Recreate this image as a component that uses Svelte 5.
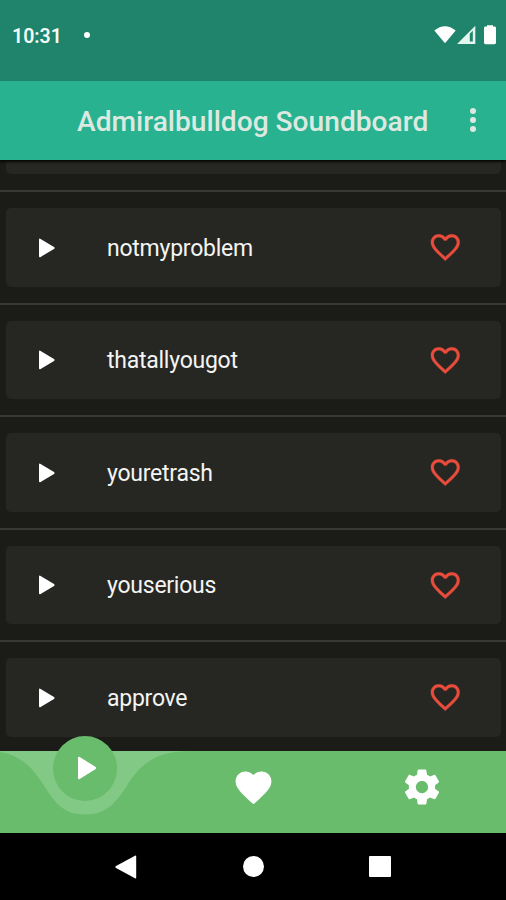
<script>
  const sounds = ['notmyproblem', 'thatallyougot', 'youretrash', 'youserious', 'approve'];
</script>

<div class="screen">
  <div class="status">
    <span class="time">10:31</span>
    <span class="dot"></span>
    <svg class="signals" width="66" height="24" viewBox="0 0 66 24" fill="#fff">
      <path d="M4.300 6.500Q15 -2 25.700 6.500L15 19.200Z" />
      <path d="M45.300 1.800V20H27.100Z" fill="#e4f4ef" />
      <path d="M39.800 9.800 42.800 6.800V17.600H39.800Z" fill="#1f866b" />
      <path d="M57 2.600V1.200h6V2.600h1.600q1.400 0 1.400 1.400V18.600q0 1.600-1.400 1.600H55.400q-1.400 0-1.400-1.600V4q0-1.400 1.400-1.400Z" />
    </svg>
  </div>

  <header>
    <h1>Admiralbulldog Soundboard</h1>
    <div class="more"><i></i><i></i><i></i></div>
  </header>

  <main>
    <div class="card partial"></div>
    {#each sounds as sound}
      <hr />
      <div class="card">
        <svg class="play" width="18" height="20" viewBox="0 0 18 20" fill="#fff">
          <path d="M1 1.8Q1 0 2.6.9L16 8.9Q17.4 9.9 16 10.9L2.6 18.9Q1 19.8 1 18Z" />
        </svg>
        <span class="name">{sound}</span>
        <svg class="like" width="34.6" height="34.6" viewBox="0 0 24 24" fill="#e74c3c" stroke="#e74c3c" stroke-width=".2">
          <path d="M16.5 3c-1.74 0-3.41.81-4.5 2.09C10.91 3.81 9.24 3 7.5 3 4.42 3 2 5.42 2 8.5c0 3.78 3.4 6.86 8.55 11.54L12 21.35l1.45-1.32C18.6 15.36 22 12.28 22 8.5 22 5.42 19.58 3 16.5 3zm-4.4 15.55l-.1.1-.1-.1C7.14 14.24 4 11.39 4 8.5 4 6.5 5.5 5 7.5 5c1.54 0 3.04.99 3.57 2.36h1.87C13.46 5.99 14.96 5 16.5 5c2 0 3.5 1.5 3.5 3.5 0 2.89-3.14 5.74-7.9 10.05z" />
        </svg>
      </div>
    {/each}
  </main>

  <nav>
    <svg class="wave" width="506" height="82" viewBox="0 0 506 82">
      <path d="M-12 0C20 0 32 17 43 33C54 50 62 63.500 85 63.500C108 63.500 117 50 128 33C140 14 155 0 190 0H506V82H-12Z" fill="#69bc6c" />
    </svg>
    <div class="tab">
      <div class="active">
        <svg width="20" height="24" viewBox="0 0 20 24" fill="#fff">
          <path d="M1 2Q1 0 2.700 1L18.300 10.800Q20 12 18.300 13.200L2.700 23Q1 24 1 22Z" />
        </svg>
      </div>
    </div>
    <div class="tab">
      <svg width="43" height="43" viewBox="0 0 24 24" fill="#fff">
        <path d="M12 21.350l-1.450-1.320C5.400 15.360 2 12.280 2 8.500 2 5.420 4.420 3 7.500 3c1.740 0 3.410.81 4.500 2.090C13.090 3.810 14.760 3 16.500 3 19.580 3 22 5.420 22 8.500c0 3.780-3.400 6.860-8.550 11.540L12 21.350z" />
      </svg>
    </div>
    <div class="tab">
      <svg width="42" height="42" viewBox="0 0 24 24" fill="#fff">
        <path d="M19.430 12.980c.04-.32.07-.64.07-.98s-.03-.66-.07-.98l2.110-1.650c.19-.15.24-.42.12-.64l-2-3.460c-.12-.22-.39-.3-.61-.22l-2.490 1c-.52-.4-1.080-.73-1.690-.98l-.38-2.650C14.460 2.180 14.250 2 14 2h-4c-.25 0-.46.18-.49.42l-.38 2.650c-.61.25-1.170.59-1.690.98l-2.490-1c-.23-.09-.49 0-.61.22l-2 3.460c-.13.22-.07.49.12.64l2.110 1.650c-.04.32-.07.65-.07.98s.03.66.07.98l-2.110 1.650c-.19.15-.24.42-.12.64l2 3.460c.12.22.39.3.61.22l2.490-1c.52.4 1.080.73 1.690.98l.38 2.650c.03.24.24.42.49.42h4c.25 0 .46-.18.49-.42l.38-2.650c.61-.25 1.170-.59 1.690-.98l2.490 1c.23.09.49 0 .61-.22l2-3.460c.12-.22.07-.49-.12-.64l-2.110-1.650zM12 15.500c-1.930 0-3.500-1.570-3.500-3.500s1.570-3.500 3.500-3.500 3.500 1.570 3.500 3.500-1.570 3.500-3.500 3.500z" />
      </svg>
    </div>
  </nav>

  <div class="system">
    <svg width="22" height="24" viewBox="0 0 22 24" fill="#fff">
      <path d="M20 .7Q21.200 0 21.200 1.400V22.600Q21.200 24 20 23.300L1 12.900Q-.2 12 1 11.100Z" />
    </svg>
    <div class="home"></div>
    <div class="recent"></div>
  </div>
</div>

<style>
  :global(body) { margin: 0; }
  .screen {
    width: 506px;
    height: 900px;
    display: flex;
    flex-direction: column;
    overflow: hidden;
    background: #1b1c18;
    font-family: Roboto, sans-serif;
  }
  .status {
    height: 80.500px;
    flex: none;
    box-sizing: border-box;
    display: flex;
    align-items: flex-start;
    padding: 24px 10px 0 12px;
    background: #1f846b;
    color: #f2fbf8;
  }
  .time {
    width: 72px;
    padding-top: 1px;
    font-size: 19.500px;
    line-height: 24px;
    font-weight: 600;
  }
  .dot {
    width: 6px;
    height: 6px;
    margin-top: 8px;
    border-radius: 50%;
    background: #fff;
  }
  .signals { margin-left: auto; }
  header {
    height: 79px;
    flex: none;
    display: flex;
    align-items: center;
    background: #28b28f;
    box-shadow: 0 2px 2px #080907;
    z-index: 1;
  }
  h1 {
    margin: 0 0 0 77px;
    padding-top: 3px;
    width: 393px;
    font-size: 28.150px;
    font-weight: 500;
    line-height: 34px;
    white-space: nowrap;
    color: #dde9e0;
  }
  .more { display: grid; gap: 2.600px; }
  .more i {
    width: 6px;
    height: 6px;
    border-radius: 50%;
    background: #dde9e0;
  }
  main {
    height: 591.500px;
    flex: none;
    overflow: hidden;
  }
  .card {
    height: 78.500px;
    box-sizing: border-box;
    margin: 0 5px 0 6px;
    padding-top: 1px;
    display: flex;
    align-items: center;
    border-radius: 5px;
    background: #262722;
  }
  .card.partial { height: 14.500px; border-radius: 0 0 5px 5px; }
  hr {
    height: 2px;
    margin: 16px 0;
    border: 0;
    background: #383935;
  }
  .play { margin-left: 32px; }
  .name {
    margin-left: 51px;
    padding-top: 2px;
    font-size: 23px;
    letter-spacing: -.25px;
    line-height: 28px;
    color: #f4f4f3;
  }
  .like { margin: 0 38.300px 0 auto; }
  nav {
    height: 82px;
    flex: none;
    display: grid;
    grid-template-columns: repeat(3, 1fr);
    position: relative;
    background: #82c985;
  }
  .wave { position: absolute; inset: 0; }
  .tab {
    position: relative;
    display: flex;
    justify-content: center;
    align-items: flex-start;
    padding: 14.500px 0 0 1px;
  }
  .active {
    width: 64px;
    height: 65px;
    margin-top: -30px;
    display: flex;
    align-items: center;
    justify-content: center;
    border-radius: 50%;
    background: #69bc6c;
  }
  .active svg { margin-left: 4px; }
  .system {
    flex: 1;
    display: grid;
    grid-template-columns: repeat(3, 127px);
    justify-content: center;
    align-items: center;
    justify-items: center;
    background: #000;
  }
  .home {
    width: 21px;
    height: 21px;
    border-radius: 50%;
    background: #fff;
  }
  .recent {
    width: 21.500px;
    height: 21.500px;
    border-radius: 1px;
    background: #fff;
  }
</style>
